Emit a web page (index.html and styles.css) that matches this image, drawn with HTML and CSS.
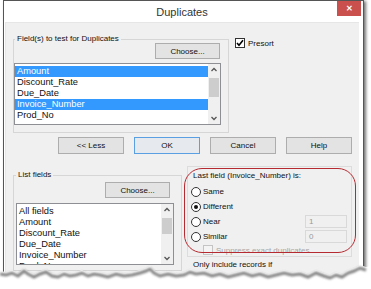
FILE: index.html
```html
<!DOCTYPE html>
<html lang="en">
<head>
    <meta charset="UTF-8">
    <title>Duplicates</title>
    <link rel="stylesheet" href="styles.css">
</head>
<body>
    <div class="window">
        <div class="titlebar">
            <span class="title">Duplicates</span>
            <span class="close">&#x2715;</span>
        </div>

        <div class="client">
            <div class="top">
                <fieldset class="group group-test">
                    <legend>Field(s) to test for Duplicates</legend>
                    <div class="btn-line"><button class="btn choose">Choose...</button></div>
                    <div class="listbox list-test">
                        <ul class="items">
                            <li class="sel">Amount</li>
                            <li>Discount_Rate</li>
                            <li>Due_Date</li>
                            <li class="sel">Invoice_Number</li>
                            <li>Prod_No</li>
                        </ul>
                        <div class="scrollbar">
                            <svg class="arrow" width="12" height="12" viewBox="0 0 12 12"><polyline points="3.5,7 6,4.5 8.5,7"/></svg>
                            <div class="thumb thumb-test"></div>
                            <svg class="arrow down" width="12" height="12" viewBox="0 0 12 12"><polyline points="3.5,5 6,7.5 8.5,5"/></svg>
                        </div>
                    </div>
                </fieldset>
                <div class="check presort">
                    <span class="box"><svg width="8" height="8" viewBox="0 0 8 8"><polyline points="1,4 3,6.3 7,1.3"/></svg></span>
                    Presort
                </div>
            </div>

            <div class="actions">
                <button class="btn">&lt;&lt; Less</button>
                <button class="btn default">OK</button>
                <button class="btn">Cancel</button>
                <button class="btn">Help</button>
            </div>

            <div class="bottom">
                <fieldset class="group group-list">
                    <legend>List fields</legend>
                    <div class="btn-line"><button class="btn choose">Choose...</button></div>
                    <div class="listbox list-fields">
                        <ul class="items">
                            <li>All fields</li>
                            <li>Amount</li>
                            <li>Discount_Rate</li>
                            <li>Due_Date</li>
                            <li>Invoice_Number</li>
                            <li>Prod_No</li>
                        </ul>
                        <div class="scrollbar">
                            <svg class="arrow" width="12" height="12" viewBox="0 0 12 12"><polyline points="3.5,7 6,4.5 8.5,7"/></svg>
                            <div class="thumb thumb-list"></div>
                            <svg class="arrow down" width="12" height="12" viewBox="0 0 12 12"><polyline points="3.5,5 6,7.5 8.5,5"/></svg>
                        </div>
                    </div>
                </fieldset>

                <div class="side">
                    <div class="panel">
                        <div class="panel-title">Last field (Invoice_Number) is:</div>
                        <div class="opt"><span class="radio"></span>Same</div>
                        <div class="opt"><span class="radio on"></span>Different</div>
                        <div class="opt"><span class="radio"></span>Near<span class="num">1</span></div>
                        <div class="opt"><span class="radio"></span>Similar<span class="num">0</span></div>
                        <div class="check suppress"><span class="box"></span>Suppress exact duplicates</div>
                    </div>
                    <div class="only">Only include records if</div>
                    <div class="oval"></div>
                </div>
            </div>
        </div>
    </div>

    <svg class="tear" width="371" height="30" viewBox="0 0 371 30">
        <defs>
            <filter id="soft" x="-5%" y="-50%" width="110%" height="200%">
                <feGaussianBlur stdDeviation="1.3"/>
            </filter>
        </defs>
        <path class="paper" d="M0,12 L6,13 L12,11 L18,14 L24,9 L28,12 L34,15 L40,12 L46,10 L52,14 L58,15 L64,12 L70,14 L76,13 L82,11 L88,14 L94,12 L100,13 L108,15 L116,12 L124,14 L132,13 L140,11 L146,9 L150,7 L154,11 L160,14 L168,12 L176,14 L184,13 L190,10 L196,12 L204,11 L212,14 L220,12 L228,15 L236,13 L244,11 L252,14 L260,12 L268,15 L276,13 L284,11 L292,13 L300,12 L308,15 L316,11 L324,14 L330,16 L336,13 L342,15 L348,11 L354,9 L360,6 L366,8 L371,7 L371,30 L0,30 Z"/>
        <path class="shade" filter="url(#soft)" d="M0,15 L6,16 L12,14 L18,17 L24,12 L28,15 L34,18 L40,15 L46,13 L52,17 L58,18 L64,15 L70,17 L76,16 L82,14 L88,17 L94,15 L100,16 L108,18 L116,15 L124,17 L132,16 L140,14 L146,12 L150,10 L154,14 L160,17 L168,15 L176,17 L184,16 L190,13 L196,15 L204,14 L212,17 L220,15 L228,18 L236,16 L244,14 L252,17 L260,15 L268,18 L276,16 L284,14 L292,16 L300,15 L308,18 L316,14 L324,17 L330,19 L336,16 L342,18 L348,14 L354,12 L360,9 L366,11"/>
    </svg>
</body>
</html>
```

FILE: styles.css
```css
* {
    box-sizing: border-box;
}

html, body {
    margin: 0;
}

body {
    position: relative;
    width: 371px;
    height: 289px;
    overflow: hidden;
    background-color: #fff;
    font-family: "Liberation Sans", Arial, sans-serif;
    font-size: 8px;
    color: #111;
}

.window {
    width: 361px;
    height: 330px;
    margin-left: 3px;
    padding: 0 4px 0 1px;
    background-color: #fff;
    border: 1px solid #555;
    border-bottom: none;
    box-shadow: 2px 1px 3px rgba(0, 0, 0, 0.55);
}

.titlebar {
    display: grid;
    grid-template-columns: 1fr auto 1fr;
    height: 21px;
}

.title {
    grid-column: 2;
    align-self: center;
    font-size: 11px;
    color: #333;
}

.close {
    grid-column: 3;
    justify-self: end;
    align-self: start;
    width: 24px;
    height: 15px;
    margin-right: -2px;
    background-color: #c9504c;
    color: #fff;
    font-size: 8px;
    font-weight: bold;
    line-height: 15px;
    text-align: center;
}

.client {
    height: 310px;
    padding: 13px 0 0 7px;
    background-color: #f0f0f0;
    border-top: 1px solid #e6e6e6;
    border-left: 1px solid #e6e6e6;
}

.top {
    display: flex;
    align-items: flex-start;
    margin-top: -1px;
}

.group {
    margin: 0;
    padding: 0;
    border: 1px solid #d6d6d6;
    min-width: 0;
}

.group legend {
    padding: 0 2px;
    line-height: 8px;
}

.group-test {
    width: 216px;
    padding-bottom: 7px;
}

.group-test legend {
    margin-left: 1px;
}

.btn-line {
    display: flex;
    justify-content: flex-end;
}

.btn {
    width: 66px;
    height: 17px;
    padding: 0;
    background-color: #e3e3e3;
    border: 1px solid #adadad;
    border-radius: 0;
    font-family: inherit;
    font-size: 8px;
    color: #111;
}

.btn.default {
    border-color: #5a9fe2;
    background-color: #e6eaee;
}

.choose {
    width: 65px;
    height: 16px;
}

.group-test .choose {
    margin-right: 8px;
}

.listbox {
    display: flex;
    background-color: #fff;
    border: 1px solid #8e8f94;
    overflow: hidden;
}

.list-test {
    width: 207px;
    height: 62px;
    margin-top: 4px;
}

.items {
    flex: 1;
    margin: 0;
    padding: 2px 0 0;
    list-style: none;
    font-size: 9.3px;
}

.items li {
    height: 11px;
    line-height: 11px;
    padding-left: 2px;
    white-space: nowrap;
}

.items li.sel {
    background-color: #3399ff;
    color: #fff;
}

.scrollbar {
    display: flex;
    flex-direction: column;
    width: 12px;
    background-color: #f0f0f0;
}

.arrow {
    flex: none;
}

.arrow polyline {
    fill: none;
    stroke: #555;
    stroke-width: 1.3;
}

.thumb {
    margin: 2px 1px 0;
    background-color: #cdcdcd;
}

.thumb-test {
    height: 19px;
}

.thumb-list {
    height: 16px;
}

.arrow.down {
    margin-top: auto;
}

.check {
    display: flex;
    align-items: center;
}

.box {
    display: flex;
    align-items: center;
    justify-content: center;
    width: 10px;
    height: 10px;
    margin-right: 3px;
    background-color: #fff;
    border: 1px solid #333;
}

.box polyline {
    fill: none;
    stroke: #000;
    stroke-width: 1.6;
}

.presort {
    margin: 3px 0 0 6px;
}

.actions {
    display: flex;
    gap: 10px;
    margin: 4px 0 0 45px;
}

.bottom {
    display: flex;
    align-items: flex-start;
    gap: 5px;
    margin-top: 12px;
}

.group-list {
    width: 169px;
    height: 100px;
    margin-top: 5px;
}

.group-list legend {
    margin-left: 2px;
}

.group-list .choose {
    margin: 3px 11px 0 0;
}

.list-fields {
    width: 158px;
    height: 62px;
    margin: 5px 0 0 2px;
}

.list-fields .items {
    padding-top: 2px;
}

.side {
    position: relative;
    width: 165px;
}

.panel {
    height: 91px;
    padding: 4px 3px 0 3px;
    border: 1px solid #dcdcdc;
}

.panel-title {
    height: 10px;
    line-height: 10px;
    margin: 0 0 3px 2px;
}

.opt {
    display: flex;
    align-items: center;
    height: 15px;
}

.radio {
    position: relative;
    width: 10px;
    height: 10px;
    margin-right: 2px;
    background-color: #fff;
    border: 1px solid #333;
    border-radius: 50%;
}

.radio.on::after {
    content: "";
    position: absolute;
    top: 2px;
    left: 2px;
    width: 4px;
    height: 4px;
    background-color: #111;
    border-radius: 50%;
}

.num {
    width: 42px;
    height: 13px;
    margin: 0 1px 0 auto;
    padding-left: 3px;
    line-height: 11px;
    color: #9a9a9a;
    background-color: #f0f0f0;
    border: 1px solid #d9d9d9;
}

.suppress {
    height: 12px;
    margin-left: 12px;
    color: #a6a6a6;
}

.suppress .box {
    border-color: #c4c4c4;
    background-color: #f4f4f4;
}

.only {
    margin: 3px 0 0 6px;
    line-height: 10px;
}

.oval {
    position: absolute;
    top: 2px;
    left: -3px;
    width: 172px;
    height: 85px;
    border: 1.6px solid #b52a30;
    border-radius: 18px;
}

.tear {
    position: absolute;
    left: 0;
    top: 259px;
}

.tear .paper {
    fill: #fff;
}

.tear .shade {
    fill: none;
    stroke: #5a5a5a;
    stroke-width: 3;
    opacity: 0.75;
}
```
